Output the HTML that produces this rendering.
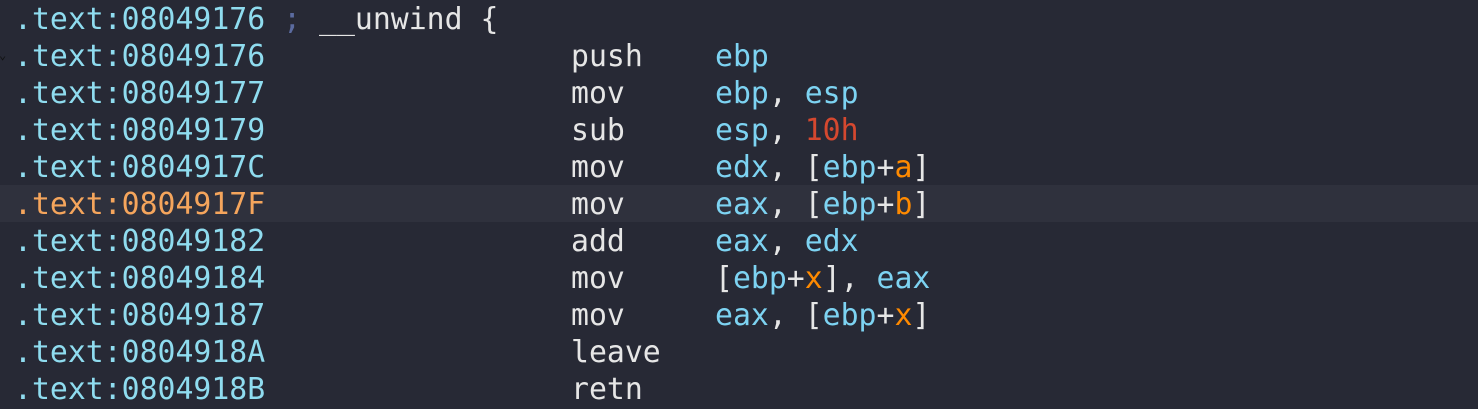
<!DOCTYPE html>
<html><head><style>
body{margin:0;width:1478px;height:408px;background:#272935;overflow:hidden;font-family:"DejaVu Sans Mono","Liberation Mono",monospace;}
.l{position:absolute;left:14px;height:37px;line-height:39px;font-size:29.8px;color:#e6e6e6;white-space:pre;width:1464px;}
.a{color:#8fdcef}
.r{color:#7dd3f2}
.n{color:#d5482f}
.v{color:#ff8a00}
.s{color:#5b6ba0}
.hl{background:#2f313d;left:0;padding-left:14px;}
.hl .a{color:#f5a55c}
.m{position:absolute;left:571px}
.o{position:absolute;left:715px}
.chk{position:absolute;left:-1px;top:48px;color:#111;font-size:12px}
</style></head><body>
<div class="l" style="top:0"><span class="a">.text:08049176</span> <span class="s">;</span> __unwind {</div>
<div class="chk">⌄</div>
<div class="l" style="top:37px"><span class="a">.text:08049176</span><span class="m" style="left:557px">push</span><span class="o" style="left:701px"><span class="r">ebp</span></span></div>
<div class="l" style="top:74px"><span class="a">.text:08049177</span><span class="m" style="left:557px">mov</span><span class="o" style="left:701px"><span class="r">ebp</span>, <span class="r">esp</span></span></div>
<div class="l" style="top:111px"><span class="a">.text:08049179</span><span class="m" style="left:557px">sub</span><span class="o" style="left:701px"><span class="r">esp</span>, <span class="n">10h</span></span></div>
<div class="l" style="top:148px"><span class="a">.text:0804917C</span><span class="m" style="left:557px">mov</span><span class="o" style="left:701px"><span class="r">edx</span>, [<span class="r">ebp</span>+<span class="v">a</span>]</span></div>
<div class="l hl" style="top:185px"><span class="a">.text:0804917F</span><span class="m">mov</span><span class="o"><span class="r">eax</span>, [<span class="r">ebp</span>+<span class="v">b</span>]</span></div>
<div class="l" style="top:222px"><span class="a">.text:08049182</span><span class="m" style="left:557px">add</span><span class="o" style="left:701px"><span class="r">eax</span>, <span class="r">edx</span></span></div>
<div class="l" style="top:259px"><span class="a">.text:08049184</span><span class="m" style="left:557px">mov</span><span class="o" style="left:701px">[<span class="r">ebp</span>+<span class="v">x</span>], <span class="r">eax</span></span></div>
<div class="l" style="top:296px"><span class="a">.text:08049187</span><span class="m" style="left:557px">mov</span><span class="o" style="left:701px"><span class="r">eax</span>, [<span class="r">ebp</span>+<span class="v">x</span>]</span></div>
<div class="l" style="top:333px"><span class="a">.text:0804918A</span><span class="m" style="left:557px">leave</span></div>
<div class="l" style="top:370px"><span class="a">.text:0804918B</span><span class="m" style="left:557px">retn</span></div>
</body></html>
